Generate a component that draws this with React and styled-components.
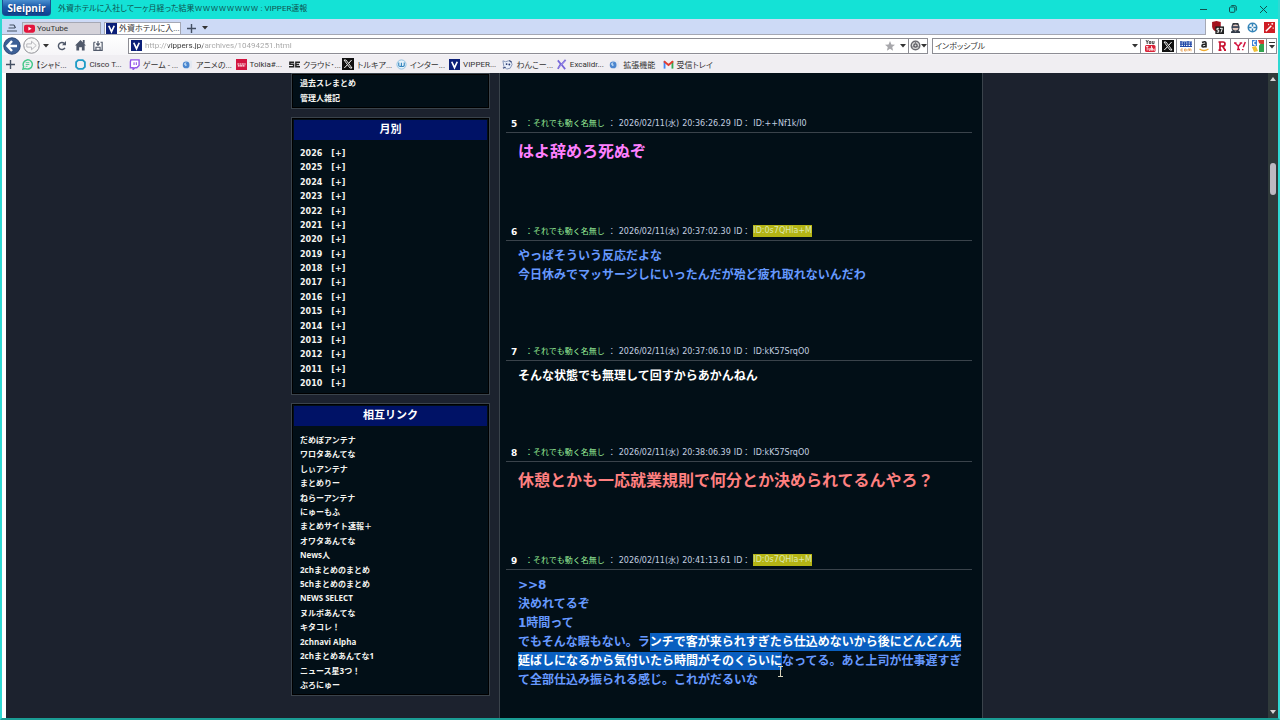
import { useState } from "react";
import styled, { createGlobalStyle, css } from "styled-components";

const GlobalStyle = createGlobalStyle`
  * {
    box-sizing: border-box;
  }
  body {
    background: #14e2d6;
    margin: 0;
    overflow: hidden;
  }
  button,
  input {
    background: none;
    border: 0;
    color: inherit;
    font: inherit;
    margin: 0;
    padding: 0;
  }
  a {
    color: inherit;
    text-decoration: none;
  }
  svg {
    display: block;
    flex: none;
  }
`;

const Window = styled.div`
  background: #14e2d6;
  border-bottom: 2px solid #1a9c94;
  border-left: 2px solid #2fd9d3;
  border-right: 2px solid #2fd9d3;
  color: #333;
  display: flex;
  flex-direction: column;
  font-family: Roboto, "Noto Sans CJK JP", sans-serif;
  font-size: 8px;
  height: 100vh;
`;

/* proportional kana, as in the system UI font */
const uiText = css`
  font-feature-settings: "palt";
  white-space: nowrap;
`;

const TitleBar = styled.header`
  align-items: flex-start;
  display: flex;
  flex: none;
  height: 19px;
`;

const BrandButton = styled.button`
  background: linear-gradient(#4a8fd0, #1d5cab 45%, #0d4390);
  border: 1px solid #1b4f8f;
  border-radius: 0 0 4px 4px;
  border-top: 0;
  color: #fff;
  font-family: "Open Sans", sans-serif;
  font-size: 10px;
  font-weight: 700;
  height: 16px;
  line-height: 14px;
  text-shadow: 0 1px 1px #0a2f66;
  width: 49px;
`;

const Title = styled.div`
  ${uiText}
  color: #0e5350;
  flex: 1;
  line-height: 18px;
  padding-left: 7px;
`;

const WindowButtons = styled.div`
  display: flex;
  height: 18px;
`;

const WindowButton = styled.button`
  align-items: center;
  color: #10504e;
  display: flex;
  justify-content: center;
  width: 30px;
`;

const TabBar = styled.nav`
  background: #cddaf6;
  border-bottom: 1px solid #a5a8b4;
  display: flex;
  flex: none;
  height: 16px;
  padding-top: 3px;
`;

const TabTool = styled.button`
  align-items: center;
  color: #445063;
  display: flex;
  justify-content: center;
  width: ${({ $width }) => $width}px;
`;

const Tab = styled.a`
  ${uiText}
  align-items: center;
  background: ${({ $active }) => ($active ? "#fff" : "#d5d3da")};
  border: 1px solid #a5a8b4;
  border-bottom: 0;
  display: flex;
  gap: 2px;
  line-height: 12px;
  margin-right: ${({ $active }) => ($active ? 0 : 3)}px;
  overflow: hidden;
  padding-left: 1px;
  width: ${({ $active }) => ($active ? 77 : 79)}px;
`;

const Extensions = styled.div`
  align-items: center;
  background: #fff;
  border-left: 1px solid #a5a8b4;
  display: flex;
  gap: 6px;
  height: 16px;
  justify-content: flex-end;
  margin: -3px 0 0 auto;
  padding: 0 3px 0 5px;
`;

const Toolbar = styled.div`
  align-items: center;
  background: linear-gradient(#fff, #f6f5f8);
  display: flex;
  flex: none;
  height: 20px;
  padding: 1px 1px 0;
`;

const NavButtons = styled.div`
  align-items: center;
  color: #50596a;
  display: flex;
  flex: none;
  width: 125px;
`;

const NavButton = styled.button`
  align-items: center;
  display: flex;
  height: 18px;
  justify-content: center;
  width: ${({ $width }) => $width}px;
`;

const Field = styled.form`
  align-items: center;
  background: #fff;
  border: 1px solid #8d8d94;
  display: flex;
  flex: ${({ $grow }) => ($grow ? 1 : "none")};
  gap: 3px;
  height: 16px;
  padding-left: 2px;
  width: ${({ $grow }) => ($grow ? "auto" : "209px")};
`;

const TextInput = styled.input`
  ${uiText}
  flex: 1;
  height: 14px;
  min-width: 0;
  outline: 0;
`;

/* host name is dark, the rest of the address is dimmed */
const AddressInput = styled(TextInput)`
  background: linear-gradient(90deg, #a3a3a3 23px, #333 23px, #333 58px, #a3a3a3 58px);
  background-clip: text;
  color: transparent;
`;

const BoxButton = styled.button`
  align-items: center;
  background: #fff;
  border: 1px solid #8d8d94;
  display: flex;
  flex: none;
  height: 16px;
  justify-content: center;
  margin-left: -1px;
  width: ${({ $width }) => $width}px;
`;

const FieldButton = styled.button`
  align-items: center;
  display: flex;
  height: 14px;
  justify-content: center;
  width: 10px;
`;

const Spacer = styled.div`
  width: 4px;
`;

const Bookmarks = styled.nav`
  ${uiText}
  align-items: center;
  background: #f0eef2;
  display: flex;
  flex: none;
  gap: 4px;
  height: 18px;
`;

const AddBookmark = styled.button`
  align-items: center;
  color: #445063;
  display: flex;
  justify-content: center;
  width: 16px;
`;

const BookmarkGrid = styled.div`
  display: grid;
  grid-template-columns: repeat(13, 1fr);
  width: 694px;
`;

const Bookmark = styled.a`
  align-items: center;
  display: flex;
  gap: 3px;
`;

const Viewport = styled.div`
  background: #1c222e;
  border-left: 4px solid #fff;
  display: flex;
  flex: 1;
  min-height: 0;
`;

const Page = styled.div`
  display: grid;
  flex: 1;
  font-family: "DejaVu Sans", "Noto Sans CJK JP", sans-serif;
  gap: 9px;
  grid-template-columns: 199px 484px;
  justify-content: center;
  overflow: hidden;
`;

const Sidebar = styled.aside`
  color: #f4f4f0;
  display: flex;
  flex-direction: column;
  font-weight: 700;
  gap: 8px;
`;

const Box = styled.section`
  background: #020f17;
  border: 1px solid #3a434b;
  box-shadow: inset 0 0 0 1px #000;
  padding: 2px 2px 3px;
`;

const BoxTitle = styled.h2`
  background: #001266;
  color: #fff;
  font-size: 11px;
  line-height: 20px;
  margin: 0 0 7px;
  text-align: center;
`;

const LinkList = styled.ul`
  align-content: space-between;
  display: grid;
  font-family: ${({ $wide }) => ($wide ? "inherit" : '"Open Sans", "Noto Sans CJK JP", sans-serif')};
  height: ${({ $height }) => $height}px;
  line-height: 14px;
  list-style: none;
  margin: 0;
  padding: 0 6px;
`;

const Expand = styled.button`
  line-height: 14px;
  margin-left: 9px;
`;

const Main = styled.main`
  background: #020f17;
  border: solid #3a434b;
  border-width: 0 1px;
  padding: 41px 10px 0 6px;
`;

const Post = styled.article`
  margin-bottom: 57px;
`;

const PostHeader = styled.header`
  border-bottom: 1px solid #3a434b;
  color: #c3cfe0;
  display: flex;
  gap: 3px;
  height: 19px;
  line-height: 20px;
  padding-left: 5px;
  white-space: nowrap;
`;

const PostNumber = styled.b`
  color: #fff;
  font-size: 9px;
  width: 11px;
`;

const PostName = styled.span`
  color: #98ee98;
`;

const PostId = styled.a`
  ${({ $marked }) =>
    $marked &&
    css`
      align-self: center;
      background: #b4b414;
      color: #dde8b0;
      line-height: 12px;
    `}
`;

const PostBody = styled.p`
  color: ${({ $color }) => $color};
  font-size: ${({ $large }) => ($large ? 16 : 12)}px;
  font-weight: 700;
  line-height: ${({ $large }) => ($large ? 26 : 19)}px;
  margin: 0;
  padding: 6px 6px 0 12px;
  white-space: pre-line;
`;

const Selected = styled.span`
  background: #0a5fc0;
  color: #fff;
  padding: 2px 0;
`;

const PointerAnchor = styled.span`
  position: relative;
`;

const Pointer = styled.svg`
  left: -5px;
  position: absolute;
  top: 12px;
`;

const Scrollbar = styled.div`
  align-items: center;
  background: #303a3a;
  display: flex;
  flex-direction: column;
  padding: 2px 0;
  width: 10px;
`;

const Thumb = styled.div`
  background: #bdb9c1;
  border-radius: 3px;
  height: 32px;
  margin: 80px 0 auto;
  width: 6px;
`;

const Down = () => (
  <svg width="6" height="4" viewBox="0 0 6 4">
    <path d="M0 0h6L3 3.5z" fill="#333" />
  </svg>
);

const Plus = () => (
  <svg width="9" height="9" viewBox="0 0 9 9">
    <path d="M4.5 0v9M0 4.5h9" stroke="currentColor" strokeWidth="1.4" />
  </svg>
);

const Icon = ({ size = 11, children }) => (
  <svg width={size} height={size} viewBox="0 0 12 12" fill="none">
    {children}
  </svg>
);

const VLogo = () => (
  <Icon>
    <path d="M0 0h12v12H0z" fill="#0b1f78" />
    <path d="M3 3l3 6.5L9 3" stroke="#fff" strokeWidth="1.8" />
  </Icon>
);

const XLogo = () => (
  <Icon size={12}>
    <path d="M0 0h12v12H0z" fill="#111" />
    <path d="M2 2h2l6 8H8z" stroke="#fff" strokeWidth="0.9" />
    <path d="M9.6 2L6.8 5.2M5.2 7L2.3 10" stroke="#fff" strokeWidth="1" />
  </Icon>
);

const YouTubeIcon = () => (
  <Icon>
    <rect y="2" width="12" height="8.5" rx="2.2" fill="#e4143c" />
    <path d="M4.8 4.2v4l3.5-2z" fill="#fff" />
  </Icon>
);

const GlobeIcon = () => (
  <Icon>
    <path d="M3 1l8 1v8l-6 1z" fill="#e3e8f1" />
    <circle cx="4.5" cy="6.5" r="3.7" fill="#4b86cf" />
    <path d="M2 5.5q1-2 3-2l-1 2 1.5 1L4 8z" fill="#bcd8f2" />
  </Icon>
);

const bookmarkIcons = {
  chat: (
    <Icon>
      <path d="M1 11l.8-2.8A5 5 0 1 1 4 10.4z" stroke="#45c98a" strokeWidth="1.6" />
      <path d="M4 4h4M4 6h4M4 8h2" stroke="#45c98a" />
    </Icon>
  ),
  cisco: (
    <Icon>
      <path d="M3.5 1.2h5l2.3 2.3v5L8.5 10.8h-5L1.2 8.5v-5z" stroke="#1f9cc6" strokeWidth="2" />
    </Icon>
  ),
  twitch: (
    <Icon>
      <path d="M2 1h9v6L8.5 9.5h-2L4.5 11.5v-2H1.5V3z" fill="#fff" stroke="#9254e8" strokeWidth="1.5" />
      <path d="M5.5 3.5v3M8 3.5v3" stroke="#9254e8" strokeWidth="1.2" />
    </Icon>
  ),
  globe: <GlobeIcon />,
  tolkia: (
    <Icon>
      <path d="M0 0h12v12H0z" fill="#d3143f" />
      <path d="M1.5 5.5h9M2 7.5h8" stroke="#fff" strokeWidth="1.1" strokeDasharray="2 .5" />
    </Icon>
  ),
  sc: (
    <Icon>
      <path d="M5.5 3.5H1v2.3h4v2.7H0M12 3.5H7.5v5H12M7.5 6H11" stroke="#222" strokeWidth="1.6" />
    </Icon>
  ),
  x: <XLogo />,
  ring: (
    <Icon>
      <circle cx="6" cy="6" r="5" fill="#e6f2fa" stroke="#8dbfe0" />
      <path d="M3 3.7v3.5q0 1 1.4 1T5.9 7V4M5.9 7q0 1.2 1.5 1.2T9 7V3.7" stroke="#3584bd" strokeWidth="1.2" />
    </Icon>
  ),
  v: <VLogo />,
  dog: (
    <Icon>
      <path d="M1 2l3 1q3-2 6 0l1 3-2 4-4 1-3-3z" fill="#e9effa" stroke="#7e8fb5" />
      <path d="M8 1.5l2.5 2M1 10l3-1" stroke="#3e5080" strokeWidth="1.3" />
      <circle cx="5" cy="5.5" r="1" fill="#25356f" />
      <circle cx="8" cy="6" r="1" fill="#25356f" />
    </Icon>
  ),
  excalidraw: (
    <Icon>
      <path d="M2 1.5l3.2 4L2 10.8M10.5 1L6 6l4 5" stroke="#7566d9" strokeWidth="1.9" />
      <path d="M3 9.5l7-8" stroke="#9c91e8" />
    </Icon>
  ),
  gmail: (
    <Icon>
      <path d="M1.7 10.5V2.5" stroke="#4285f4" strokeWidth="2" />
      <path d="M10.3 10.5V2.5" stroke="#34a853" strokeWidth="2" />
      <path d="M1 2.5l5 4 5-4" stroke="#e33b2e" strokeWidth="2" />
    </Icon>
  ),
};

const bookmarks = [
  ["chat", "【シャド..."],
  ["cisco", "Cisco T..."],
  ["twitch", "ゲーム - ..."],
  ["globe", "アニメの..."],
  ["tolkia", "Tolkia#..."],
  ["sc", "クラウド･..."],
  ["x", "トルキア..."],
  ["ring", "インター..."],
  ["v", "VIPPER..."],
  ["dog", "わんこー..."],
  ["excalidraw", "Excalidr..."],
  ["globe", "拡張機能"],
  ["gmail", "受信トレイ"],
];

const searchEngines = [
  {
    name: "YouTube",
    icon: (
      <Icon size={12}>
        <path d="M2 0l1.2 2.3V4M4.4 0L3.2 2.3M5.3 1.5h1.5v2H5.3zM8.3 1v2.7H10V1" stroke="#333" strokeWidth=".9" />
        <rect x="1" y="5" width="10.5" height="7" rx="1.5" fill="#d92237" />
        <path d="M2 6.5h2.4M3.2 6.5v4M5 8v2.3h1.3V8M7.5 6v4.3h1V8h-1M10.7 9H9.8v1.3h1" stroke="#fff" strokeWidth=".8" />
      </Icon>
    ),
  },
  { name: "X", icon: <XLogo /> },
  {
    name: "価格.com",
    icon: (
      <Icon size={12}>
        <path d="M0 2h12M0 4.2h12M0 6.5h12M1 1v6M3.5 2v5M5.5 2v5M8 1v6M10.8 2v5" stroke="#2148a8" strokeWidth="1.2" />
        <path d="M3 9H1v2h2M4.5 9h1.7v2H4.5zM8 11.3V9h3v2.3M9.5 9v2" stroke="#e59a4b" strokeWidth=".8" />
      </Icon>
    ),
  },
  {
    name: "Amazon",
    icon: (
      <Icon size={12}>
        <path d="M4 2.5q4-1.8 4 .6V7.5M8 4.3q-4-.3-4 1.6T8 6.3" stroke="#222" strokeWidth="1.6" />
        <path d="M1.5 9q4.5 3 9 0" stroke="#efa92d" strokeWidth="1.3" />
      </Icon>
    ),
  },
  {
    name: "楽天",
    icon: (
      <Icon size={12}>
        <path d="M4 10V2h3q2 0 2 2t-2 2H4M6.5 6L9 10M2.5 10.2h3M2.5 2H5M8 10.2h2" stroke="#c8102e" strokeWidth="1.7" />
      </Icon>
    ),
  },
  {
    name: "Yahoo! JAPAN",
    icon: (
      <Icon size={12}>
        <path d="M1 3l3.3 3.2V9.5M7 3L4.3 6.2M0 3h2.5M5.7 3h2.5M3 9.5h3M11.3 2L9.2 7.3M8.7 9v1.2" stroke="#d3143f" strokeWidth="1.5" />
      </Icon>
    ),
  },
  {
    name: "Google",
    icon: (
      <Icon size={12}>
        <path d="M0 0h5v6H0z" fill="#3c82d8" />
        <path d="M6 0h6v6H8z" fill="#d93b33" />
        <path d="M7 4h5v8H7z" fill="#32a350" />
        <path d="M0 7l4-1 2 5-4 1z" fill="#f0bf35" />
        <path d="M4 1q-2.5 0-2.5 2T4 5M5 7.5l3-4" stroke="#fff" strokeWidth="1.2" />
      </Icon>
    ),
  },
];

const years = Array.from({ length: 17 }, (_, i) => 2026 - i);

const antennas = [
  "だめぽアンテナ",
  "ワロタあんてな",
  "しぃアンテナ",
  "まとめりー",
  "ねらーアンテナ",
  "にゅーもふ",
  "まとめサイト速報＋",
  "オワタあんてな",
  "News人",
  "2chまとめのまとめ",
  "5chまとめのまとめ",
  "NEWS SELECT",
  "ヌルポあんてな",
  "キタコレ！",
  "2chnavi Alpha",
  "2chまとめあんてな1",
  "ニュース星3つ！",
  "ぶろにゅー",
];

const IBeam = () => (
  <PointerAnchor>
    <Pointer width="7" height="11" viewBox="0 0 7 11">
      <path d="M1 .5h5M3.5 .5v10M1 10.5h5" stroke="#d8d2b8" fill="none" />
    </Pointer>
  </PointerAnchor>
);

const posts = [
  { number: 5, time: "20:36:26.29", id: "++Nf1k/I0", color: "#ff80ff", large: true, body: "はよ辞めろ死ぬぞ" },
  {
    number: 6,
    time: "20:37:02.30",
    id: "0s7QHla+M",
    marked: true,
    color: "#6699ff",
    body: "やっぱそういう反応だよな\n今日休みでマッサージしにいったんだが殆ど疲れ取れないんだわ",
  },
  { number: 7, time: "20:37:06.10", id: "kK57SrqO0", color: "#fff", body: "そんな状態でも無理して回すからあかんねん" },
  {
    number: 8,
    time: "20:38:06.39",
    id: "kK57SrqO0",
    color: "#ff8080",
    large: true,
    body: "休憩とかも一応就業規則で何分とか決められてるんやろ？",
  },
  {
    number: 9,
    time: "20:41:13.61",
    id: "0s7QHla+M",
    marked: true,
    color: "#6699ff",
    body: (
      <>
        {">>8\n決めれてるぞ\n1時間って\nでもそんな暇もない。ラ"}
        <Selected>ンチで客が来られすぎたら仕込めないから後にどんどん先延ばしになるから気付いたら時間がそのくらいに</Selected>
        <IBeam />
        なってる。あと上司が仕事遅すぎて全部仕込み振られる感じ。これがだるいな
      </>
    ),
  },
];

const App = () => {
  const [address, setAddress] = useState("http://vippers.jp/archives/10494251.html");
  const [query, setQuery] = useState("インポッシブル");

  return (
    <Window lang="ja">
      <GlobalStyle />

      <TitleBar>
        <BrandButton type="button">Sleipnir</BrandButton>
        <Title>外資ホテルに入社して一ヶ月経った結果ｗｗｗｗｗｗｗｗ : VIPPER速報</Title>
        <WindowButtons>
          <WindowButton type="button" aria-label="最小化">
            <svg width="7" height="7" viewBox="0 0 7 7">
              <path d="M0 3.5h7" stroke="currentColor" />
            </svg>
          </WindowButton>
          <WindowButton type="button" aria-label="元に戻す">
            <svg width="8" height="8" viewBox="0 0 8 8" fill="none" stroke="currentColor">
              <rect x=".5" y="2" width="5.3" height="5.3" rx="1" />
              <path d="M2.3.6h3.5q1.5 0 1.5 1.5v3.5" />
            </svg>
          </WindowButton>
          <WindowButton type="button" aria-label="閉じる">
            <svg width="7" height="7" viewBox="0 0 7 7">
              <path d="M0 0l7 7M7 0L0 7" stroke="currentColor" />
            </svg>
          </WindowButton>
        </WindowButtons>
      </TitleBar>

      <TabBar>
        <TabTool type="button" aria-label="タブ一覧" $width={20}>
          <svg width="10" height="8" viewBox="0 0 10 8">
            <path d="M2.5 1H7M1.5 4H8M0 7h10M7 1l1.5 3" stroke="currentColor" strokeWidth="1.2" fill="none" />
          </svg>
        </TabTool>
        <Tab href="#youtube">
          <YouTubeIcon />
          YouTube
        </Tab>
        <Tab href="#vippers" $active>
          <VLogo />
          外資ホテルに入...
        </Tab>
        <TabTool type="button" aria-label="新しいタブ" $width={20}>
          <Plus />
        </TabTool>
        <TabTool type="button" aria-label="タブメニュー" $width={8}>
          <Down />
        </TabTool>
        <Extensions>
          <Icon size={13}>
            <path d="M1 1l4-1 4 1v4q0 3-4 5-4-2-4-5z" fill="#a4121e" />
            <path d="M4 5h8v7H4z" fill="#222" />
            <path d="M7.3 6.8H5.5v1.5h1.6v2H5.3M8.2 6.8h2.3l-1.3 3.7" stroke="#fff" strokeWidth=".9" />
          </Icon>
          <Icon>
            <path d="M3 1h6l1 3H2z" fill="#333" />
            <circle cx="6" cy="6" r="3.8" fill="#e6c9bd" stroke="#3b4452" strokeWidth="1.2" />
            <path d="M2 5.5h8" stroke="#2d3b50" strokeWidth="1.8" />
            <path d="M1 12q0-3 3-3l2 1.5L8 9q3 0 3 3z" fill="#333b49" />
          </Icon>
          <Icon>
            <circle cx="6" cy="6" r="4.6" stroke="#3484b8" strokeWidth="1.7" />
            <path d="M6 2v3M6 7v3M2 6h3M7 6h3" stroke="#3484b8" strokeWidth="1.6" />
          </Icon>
          <Icon>
            <path d="M0 0h12v12H0z" fill="#cf1d25" />
            <path d="M2 10l6-6" stroke="#fff" strokeWidth="1.6" />
            <path d="M9 1v2M8 2h2M5 2v1.5M10 6v1.5" stroke="#fff" />
          </Icon>
        </Extensions>
      </TabBar>

      <Toolbar>
        <NavButtons>
          <NavButton type="button" aria-label="戻る" $width={18}>
            <svg width="18" height="18" viewBox="0 0 18 18">
              <circle cx="9" cy="9" r="8.2" fill="#3c5f96" stroke="#2c4776" />
              <path d="M9 4L4.5 9 9 14M5 9h9" stroke="#fff" strokeWidth="2.4" fill="none" />
            </svg>
          </NavButton>
          <NavButton type="button" aria-label="進む" $width={20}>
            <svg width="17" height="17" viewBox="0 0 18 18" fill="none">
              <circle cx="9" cy="9" r="8.2" fill="#f8f8f8" stroke="#8a8a90" />
              <path d="M4 7.3h5V4.5L14 9l-5 4.5v-2.8H4z" stroke="#b5b5ba" />
            </svg>
          </NavButton>
          <NavButton type="button" aria-label="履歴" $width={10}>
            <Down />
          </NavButton>
          <NavButton type="button" aria-label="更新" $width={22}>
            <Icon size={10}>
              <path d="M9.5 8.2A4.2 4.2 0 1 1 8.8 3" stroke="currentColor" strokeWidth="1.7" />
              <path d="M10.8 0v5H6z" fill="currentColor" />
            </Icon>
          </NavButton>
          <NavButton type="button" aria-label="ホーム" $width={15}>
            <Icon size={11}>
              <path d="M6 0l6 6h-1.5v5.5h-3V8h-3v3.5h-3V6H0z" fill="currentColor" />
              <path d="M8.5 0h2v4h-2z" fill="currentColor" />
            </Icon>
          </NavButton>
          <NavButton type="button" aria-label="保存" $width={19}>
            <Icon size={10}>
              <path d="M1 1.5h2M9 1.5h2v9.7H1V1.5M3.5 11V7.5h5V11" stroke="currentColor" strokeWidth="1.4" />
              <path d="M6 0v5M4 3l2 2.3L8 3" stroke="currentColor" strokeWidth="1.4" />
            </Icon>
          </NavButton>
        </NavButtons>
        <Field $grow onSubmit={(e) => e.preventDefault()}>
          <VLogo />
          <AddressInput aria-label="アドレス" value={address} onChange={(e) => setAddress(e.target.value)} />
          <FieldButton type="button" aria-label="お気に入りに追加">
            <Icon size={10}>
              <path d="M6 0l1.7 4.2 4.3.3-3.3 2.8 1 4.5L6 9.3l-3.7 2.5 1-4.5L0 4.5l4.3-.3z" fill="#a7a7ab" />
            </Icon>
          </FieldButton>
          <FieldButton type="button" aria-label="アドレス履歴">
            <Down />
          </FieldButton>
        </Field>
        <BoxButton type="button" aria-label="レンダリングエンジン" $width={20}>
          <Icon size={11}>
            <circle cx="6" cy="6" r="4.7" fill="#ddd" stroke="#6a6a70" strokeWidth="1.6" />
            <circle cx="6" cy="6" r="1.8" stroke="#55555c" strokeWidth="1.4" />
            <path d="M6 1v3M1.5 8l3-1M10.5 8l-3-1" stroke="#77777c" />
          </Icon>
          <Down />
        </BoxButton>
        <Spacer />
        <Field onSubmit={(e) => e.preventDefault()}>
          <TextInput aria-label="検索" value={query} onChange={(e) => setQuery(e.target.value)} />
          <FieldButton type="button" aria-label="検索履歴">
            <Down />
          </FieldButton>
        </Field>
        {searchEngines.map(({ name, icon }) => (
          <BoxButton key={name} type="button" aria-label={name} $width={19}>
            {icon}
          </BoxButton>
        ))}
        <BoxButton type="button" aria-label="その他の検索" $width={11}>
          <svg width="6" height="7" viewBox="0 0 6 7">
            <path d="M0 .5h6" stroke="#333" />
            <path d="M0 3h6L3 6.5z" fill="#333" />
          </svg>
        </BoxButton>
      </Toolbar>

      <Bookmarks>
        <AddBookmark type="button" aria-label="お気に入りを追加">
          <Plus />
        </AddBookmark>
        <BookmarkGrid>
          {bookmarks.map(([icon, label]) => (
            <Bookmark key={label} href="#bookmark">
              {bookmarkIcons[icon]}
              {label}
            </Bookmark>
          ))}
        </BookmarkGrid>
      </Bookmarks>

      <Viewport>
        <Page>
          <Sidebar>
            <Box as="nav">
              <LinkList $height={29}>
                <li>
                  <a href="#past">過去スレまとめ</a>
                </li>
                <li>
                  <a href="#admin">管理人雑記</a>
                </li>
              </LinkList>
            </Box>
            <Box>
              <BoxTitle>月別</BoxTitle>
              <LinkList $wide $height={244}>
                {years.map((year) => (
                  <li key={year}>
                    {year}
                    <Expand type="button">[+]</Expand>
                  </li>
                ))}
              </LinkList>
            </Box>
            <Box>
              <BoxTitle>相互リンク</BoxTitle>
              <LinkList $height={259}>
                {antennas.map((name) => (
                  <li key={name}>
                    <a href="#antenna">{name}</a>
                  </li>
                ))}
              </LinkList>
            </Box>
          </Sidebar>

          <Main>
            {posts.map(({ number, time, id, marked, color, large, body }) => (
              <Post key={number}>
                <PostHeader>
                  <PostNumber>{number}</PostNumber>
                  <PostName>：それでも動く名無し</PostName>
                  <span>：</span>
                  <span>2026/02/11(水)</span>
                  <span>{time}</span>
                  <span>ID：</span>
                  <PostId href="#id" $marked={marked}>
                    ID:{id}
                  </PostId>
                </PostHeader>
                <PostBody $color={color} $large={large}>
                  {body}
                </PostBody>
              </Post>
            ))}
          </Main>
        </Page>

        <Scrollbar>
          <svg width="6" height="8" viewBox="0 0 6 8">
            <path d="M3 2l3 4H0z" fill="#d5d5d5" />
          </svg>
          <Thumb />
          <svg width="6" height="8" viewBox="0 0 6 8">
            <path d="M0 2h6L3 6z" fill="#d5d5d5" />
          </svg>
        </Scrollbar>
      </Viewport>
    </Window>
  );
};

export default App;
